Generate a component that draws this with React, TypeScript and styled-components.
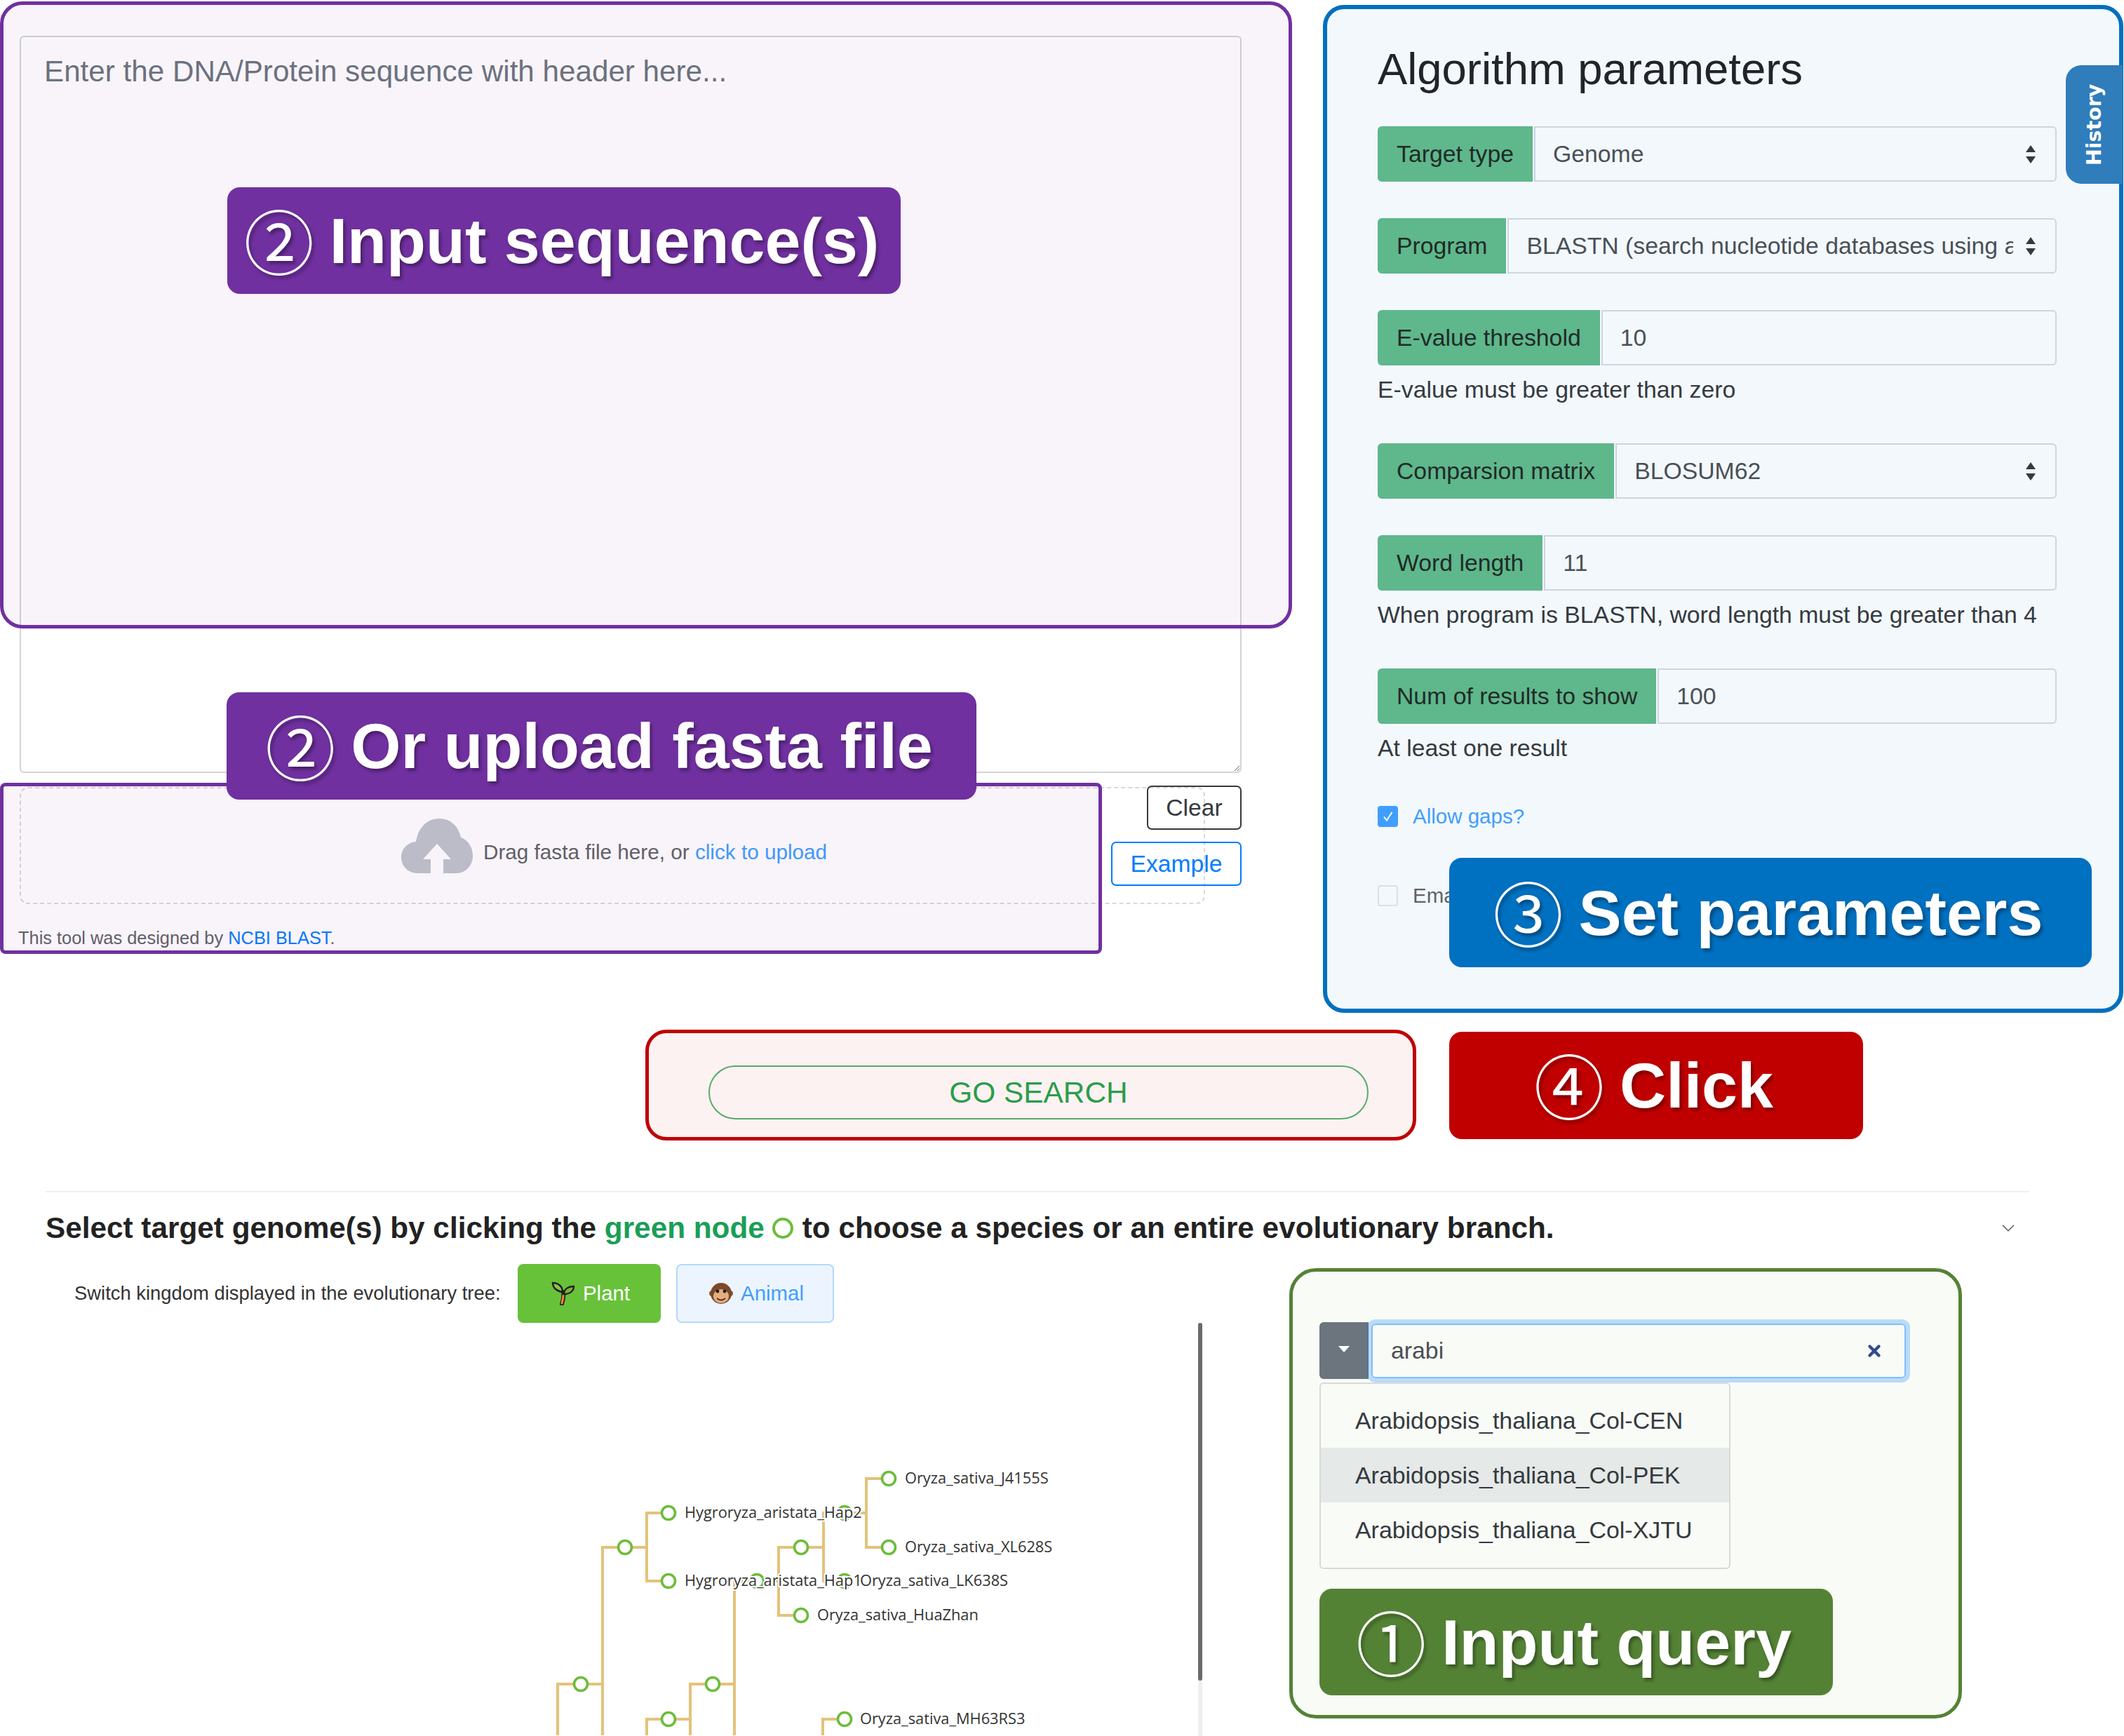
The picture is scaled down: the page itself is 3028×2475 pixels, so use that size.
import * as React from "react";
import styled, { createGlobalStyle } from "styled-components";
import { ChevronDown, X } from "lucide-react";

const GlobalStyle = createGlobalStyle`
    html, body {
        margin: 0;
        padding: 0;
        background: #fff;
        font-family: "Liberation Sans", Arial, sans-serif;
        color: #212529;
    }
`;

const Page = styled.div`
    position: relative;
    width: 3028px;
    height: 2475px;
    overflow: hidden;
    background: #fff;
`;

const TopRow = styled.div`
    position: relative;
    display: flex;
    height: 1444px;
`;

/* ---- callouts ---- */
const Callout = styled.div<{ $bg: string; $w: number; $h: number }>`
    display: flex;
    align-items: center;
    justify-content: center;
    flex: none;
    gap: 29px;
    box-sizing: border-box;
    width: ${p => p.$w}px;
    height: ${p => p.$h}px;
    padding-right: 7px;
    border-radius: 18px;
    background: ${p => p.$bg};
    color: #fff;
    font-family: "Liberation Sans", Arial, sans-serif;
    font-size: 91.6px;
    font-weight: 700;
    white-space: nowrap;
    text-shadow: 3px 4px 4px rgba(0, 0, 0, 0.35);
`;

const Digit = styled.span`
    font-family: "Noto Sans CJK JP", "DejaVu Sans", sans-serif;
    font-size: 100px;
    font-weight: 400;
    line-height: 1;
    width: 93px;
    margin-top: -4px;
    text-align: center;
`;

const SequenceCallout = styled(Callout)`
    position: absolute;
    left: 324px;
    top: 267px;
    z-index: 3;
`;

const UploadCallout = styled(Callout)`
    position: absolute;
    left: 323px;
    top: 987px;
    z-index: 3;
`;

const ParamsCallout = styled(Callout)`
    position: absolute;
    left: 2066px;
    top: 1223px;
    z-index: 3;
`;

/* ---- highlight frames over the form ---- */
const SequenceFrame = styled.div`
    position: absolute;
    left: 0;
    top: 2px;
    width: 1842px;
    height: 894px;
    box-sizing: border-box;
    border: 5px solid #7030a0;
    border-radius: 32px;
    background: rgba(112, 48, 160, 0.05);
    pointer-events: none;
    z-index: 2;
`;

const UploadFrame = styled.div`
    position: absolute;
    left: 0;
    top: 1116px;
    width: 1571px;
    height: 244px;
    box-sizing: border-box;
    border: 5px solid #7030a0;
    border-radius: 8px;
    background: rgba(112, 48, 160, 0.05);
    pointer-events: none;
    z-index: 2;
`;

/* ---- left column ---- */
const LeftColumn = styled.div`
    flex: none;
    box-sizing: border-box;
    width: 1886px;
    padding: 51px 0 0 28px;
`;

const SequenceInput = styled.textarea`
    display: block;
    box-sizing: border-box;
    width: 1742px;
    height: 1051px;
    padding: 17px 33px;
    border: 2px solid #ced4da;
    border-radius: 6px;
    background: #fff;
    font-family: "Liberation Sans", Arial, sans-serif;
    font-size: 42.2px;
    line-height: 1.5;
    outline: none;

    &::placeholder {
        color: #6c757d;
        opacity: 1;
    }
`;

const UploadBlock = styled.div`
    position: relative;
    width: 1742px;
    margin-top: 20px;
`;

const Dropzone = styled.div`
    display: flex;
    align-items: center;
    justify-content: center;
    gap: 15px;
    box-sizing: border-box;
    width: 1690px;
    height: 167px;
    padding-left: 5px;
    border: 2px dashed #d9d9d9;
    border-radius: 12px;
    font-size: 29.7px;
    color: #606266;
`;

const UploadPrompt = styled.span`
    margin-top: 19px;
`;

const UploadLink = styled.em`
    font-style: normal;
    color: #409eff;
`;

const UploadButtons = styled.div`
    position: absolute;
    right: 0;
    top: -2px;
    display: flex;
    flex-direction: column;
    align-items: flex-end;
    gap: 17px;
`;

const OutlineButton = styled.div<{ $color: string; $w: number }>`
    display: flex;
    align-items: center;
    justify-content: center;
    box-sizing: border-box;
    width: ${p => p.$w}px;
    height: 63px;
    border: 2px solid ${p => p.$color};
    border-radius: 7px;
    color: ${p => p.$color};
    font-size: 33.7px;
`;

const Credit = styled.div`
    margin: 29px 0 0 -2px;
    font-size: 25.4px;
    line-height: 39px;
    color: #606266;
`;

const BlueLink = styled.span`
    color: #007bff;
`;

/* ---- parameters panel ---- */
const ParamsPanel = styled.div`
    position: relative;
    flex: none;
    box-sizing: border-box;
    width: 1141px;
    height: 1437px;
    margin-top: 7px;
    padding: 46px 89px 0 72px;
    border: 6px solid #0070c0;
    border-radius: 30px;
    background: #f3f8fc;
`;

const PanelTitle = styled.h2`
    margin: 0 0 42px;
    font-size: 63.4px;
    font-weight: 400;
    line-height: 79px;
    color: #212529;
`;

const HistoryTab = styled.div`
    position: absolute;
    right: -5px;
    top: 80px;
    display: flex;
    align-items: center;
    justify-content: center;
    box-sizing: border-box;
    width: 81px;
    height: 169px;
    background: #2f7dbb;
    color: #fff;
    font-family: "DejaVu Sans", sans-serif;
    font-size: 28.5px;
    font-weight: 700;
    writing-mode: vertical-rl;
    transform: rotate(180deg);
    border-radius: 0 22px 22px 0;
`;

const Field = styled.div`
    margin-bottom: 52px;
`;

const Group = styled.div`
    display: flex;
    height: 79px;
`;

const GroupLabel = styled.div`
    flex: none;
    display: flex;
    align-items: center;
    padding: 0 27px;
    border-radius: 6px 0 0 6px;
    background: #5fb78c;
    color: #1f2b26;
    font-size: 33.75px;
`;

const GroupValue = styled.div`
    flex: 1;
    min-width: 0;
    display: flex;
    align-items: center;
    gap: 17px;
    box-sizing: border-box;
    padding: 0 27px 0 25px;
    margin-left: 2px;
    border: 2px solid #ccd6e0;
    border-radius: 0 6px 6px 0;
    color: #495057;
    font-size: 33.75px;
`;

const ValueText = styled.span`
    flex: 1;
    min-width: 0;
    overflow: hidden;
    white-space: nowrap;
`;

const Hint = styled.div`
    margin-top: 10px;
    font-size: 33.75px;
    line-height: 49px;
    color: #343a40;
`;

const CheckRow = styled.div<{ $gap: number }>`
    display: flex;
    align-items: center;
    gap: 21px;
    height: 30px;
    margin-top: ${p => p.$gap}px;
    font-size: 29.5px;
`;

const CheckBox = styled.span<{ $checked?: boolean }>`
    flex: none;
    display: flex;
    align-items: center;
    justify-content: center;
    box-sizing: border-box;
    width: 29px;
    height: 30px;
    border: 2px solid ${p => (p.$checked ? "#409eff" : "#dcdfe6")};
    border-radius: 4px;
    background: ${p => (p.$checked ? "#409eff" : "transparent")};
`;

const CheckLabel = styled.span<{ $checked?: boolean }>`
    color: ${p => (p.$checked ? "#409eff" : "#606266")};
`;

/* ---- search row ---- */
const SearchRow = styled.div`
    display: flex;
    align-items: center;
    gap: 47px;
    margin-top: 24px;
    padding-left: 920px;
`;

const SearchFrame = styled.div`
    box-sizing: border-box;
    width: 1099px;
    height: 158px;
    padding: 46px 0 0 85px;
    border: 5px solid #c00000;
    border-radius: 30px;
    background: #fbf2f1;
`;

const SearchButton = styled.div`
    display: flex;
    align-items: center;
    justify-content: center;
    box-sizing: border-box;
    width: 941px;
    height: 77px;
    border: 2px solid #56ab6c;
    border-radius: 39px;
    color: #2a9d4a;
    font-size: 42.4px;
`;

/* ---- genome section ---- */
const GenomeSection = styled.section`
    width: 2828px;
    margin: 72px 0 0 65px;
`;

const SectionHeader = styled.div`
    display: flex;
    align-items: center;
    justify-content: space-between;
    box-sizing: border-box;
    height: 104px;
    padding: 0 15px 0 0;
    border-top: 2px solid #eef0f8;
`;

const SectionTitle = styled.h3`
    display: flex;
    align-items: center;
    margin: 0;
    font-size: 42.3px;
    font-weight: 700;
    white-space: pre;
    color: #222;
`;

const GreenWord = styled.span`
    color: #1a9e56;
`;

const NodeSvg = styled.svg`
    margin: 0 12px 0 10px;
`;

const SectionBody = styled.div`
    display: flex;
    align-items: flex-start;
`;

const TreeColumn = styled.div`
    flex: none;
    width: 1773px;
`;

const KingdomRow = styled.div`
    display: flex;
    align-items: center;
    height: 84px;
    padding-left: 41px;
    font-size: 27.4px;
    color: #333;
`;

const KingdomLabel = styled.span`
    margin-right: 24px;
`;

const KingdomButton = styled.div<{ $active?: boolean; $w: number }>`
    display: flex;
    align-items: center;
    justify-content: center;
    gap: 11px;
    box-sizing: border-box;
    width: ${p => p.$w}px;
    height: 84px;
    margin-right: 22px;
    padding-left: 5px;
    border: 2px solid ${p => (p.$active ? "#67c23a" : "#b3d8ff")};
    border-radius: 8px;
    background: ${p => (p.$active ? "#67c23a" : "#ecf5ff")};
    color: ${p => (p.$active ? "#fff" : "#409eff")};
    font-size: 29.4px;
`;

const TreeArea = styled.div`
    display: flex;
    height: 590px;
`;

const TreeCanvas = styled.svg`
    display: block;
    flex: none;
    width: 1643px;
    height: 588px;
`;

const ScrollTrack = styled.div`
    flex: none;
    width: 6px;
    background: #eee;
`;

const ScrollThumb = styled.div`
    height: 510px;
    border-radius: 3px;
    background: #6b6b6b;
`;

const QueryFrame = styled.div`
    flex: none;
    box-sizing: border-box;
    width: 959px;
    height: 642px;
    margin-top: 6px;
    padding: 72px 0 0 38px;
    border: 5px solid #548235;
    border-radius: 38px;
    background: #f9fbf6;
`;

const QueryRow = styled.div`
    display: flex;
    align-items: center;
    height: 81px;
`;

const CaretButton = styled.div`
    flex: none;
    display: flex;
    align-items: center;
    justify-content: center;
    width: 70px;
    height: 81px;
    border-radius: 6px 0 0 6px;
    background: #6c757d;
`;

const Caret = styled.span`
    width: 0;
    height: 0;
    margin-top: -4px;
    border-left: 8px solid transparent;
    border-right: 8px solid transparent;
    border-top: 9px solid #fff;
`;

const QueryInput = styled.div`
    position: relative;
    flex: none;
    display: flex;
    align-items: center;
    justify-content: space-between;
    box-sizing: border-box;
    width: 762px;
    height: 78px;
    margin-left: 4px;
    padding: 0 30px 0 26px;
    border: 2px solid #80bdff;
    border-radius: 6px;
    box-shadow: 0 0 0 6px rgba(0, 123, 255, 0.25);
    color: #495057;
    font-size: 33.8px;
`;

const SuggestList = styled.div`
    box-sizing: border-box;
    width: 586px;
    height: 266px;
    margin-top: 5px;
    padding: 13px 0;
    border: 2px solid #d8dad6;
    border-radius: 6px;
`;

const SuggestItem = styled.div<{ $active?: boolean }>`
    display: flex;
    align-items: center;
    height: 78px;
    padding-left: 49px;
    background: ${p => (p.$active ? "#e5e9e7" : "transparent")};
    color: #343a40;
    font-size: 33.9px;
`;

const QueryCallout = styled(Callout)`
    margin-top: 28px;
`;

/* ---- small drawings ---- */
const SelectArrows = () => (
    <svg width="16" height="28" viewBox="0 0 16 28">
        <path d="M8 1 L15 11 L1 11 Z M8 27 L15 17 L1 17 Z" fill="#343a40" />
    </svg>
);

const CheckMark = () => (
    <svg width="20" height="20" viewBox="0 0 20 20">
        <path d="M4 10.5 L8 15.5 L15.5 4" fill="none" stroke="#fff" strokeWidth="2" />
    </svg>
);

const CloudUpload = () => (
    <svg width="102" height="78" viewBox="0 0 102 78">
        <path
            d="M24 78 C9 78 0 67 0 55 C0 43 9 34 21 33 C24 14 36 0 54 0 C71 0 82 12 85 27 C95 30 102 41 102 53 C102 67 92 78 78 78 L60 78 L60 58 L71 58 L51 36 L31 58 L42 58 L42 78 Z"
            fill="#c0c4cc"
        />
    </svg>
);

const PlantIcon = () => (
    <svg width="34" height="34" viewBox="0 0 34 34">
        <path d="M17 15 C18 21 17 26 15 32" fill="none" stroke="#222" strokeWidth="6" strokeLinecap="round" />
        <path d="M17 20 C17 24 16 27 15 31" fill="none" stroke="#f08a24" strokeWidth="3" strokeLinecap="round" />
        <path d="M16 15 C8 14 2 9 2 2 C10 2 16 7 16 15 Z" fill="#8cc63f" stroke="#222" strokeWidth="2.4" />
        <path d="M18 18 C18 11 24 7 32 7 C32 14 26 18 18 18 Z" fill="#7ab82f" stroke="#222" strokeWidth="2.4" />
    </svg>
);

const MonkeyIcon = () => (
    <svg width="34" height="34" viewBox="0 0 34 34">
        <circle cx="4" cy="17" r="4" fill="#8b5e3c" />
        <circle cx="30" cy="17" r="4" fill="#8b5e3c" />
        <circle cx="17" cy="17" r="15" fill="#7a4a2a" />
        <ellipse cx="17" cy="21" rx="11" ry="10" fill="#e2ae82" />
        <circle cx="12" cy="14" r="2.4" fill="#2a1a10" />
        <circle cx="22" cy="14" r="2.4" fill="#2a1a10" />
        <path d="M11 24 Q17 29 23 24" fill="none" stroke="#5a3018" strokeWidth="2" />
    </svg>
);

const NodeMark = () => (
    <NodeSvg width="32" height="32" viewBox="0 0 32 32">
        <circle cx="16" cy="16" r="13" fill="none" stroke="#6cbd3a" strokeWidth="4" />
    </NodeSvg>
);

/* ---- tree data, in page coordinates ---- */
const treeNodes: [number, number][] = [
    [1267, 2109], [1267, 2207], [953, 2158], [953, 2255], [891, 2207], [828, 2402], [1142, 2207],
    [1204, 2158], [1204, 2255], [1079, 2255], [1142, 2304], [1016, 2402], [953, 2452], [1204, 2452]
];

const treeBranches = [
    "M1204 2158 H1235 M1267 2109 H1235 V2207 H1267",
    "M1142 2207 H1174 M1204 2158 H1174 V2255 H1204",
    "M1079 2255 H1110 M1142 2207 H1110 V2304 H1142",
    "M891 2207 H922 M953 2158 H922 V2255 H953",
    "M828 2402 H859 M891 2207 H859 V2480",
    "M1016 2402 H1047 M1079 2255 H1047 V2480",
    "M953 2452 H984 M1016 2402 H984 V2480",
    "M953 2452 H922 V2480",
    "M828 2402 H795 V2480",
    "M1204 2452 H1173 V2480"
];

const treeLabels: [number, number, string][] = [
    [1290, 2109, "Oryza_sativa_J4155S"],
    [1290, 2207, "Oryza_sativa_XL628S"],
    [976, 2158, "Hygroryza_aristata_Hap2"],
    [976, 2255, "Hygroryza_aristata_Hap1"],
    [1226, 2255, "Oryza_sativa_LK638S"],
    [1165, 2304, "Oryza_sativa_HuaZhan"],
    [1226, 2452, "Oryza_sativa_MH63RS3"]
];

const params = {
    purple: "#7030a0",
    blue: "#0070c0",
    red: "#c00000",
    green: "#548235"
};

const App: React.FC = () => {
    return <Page>
        <GlobalStyle />
        <TopRow>
            <SequenceFrame />
            <UploadFrame />
            <SequenceCallout $bg={params.purple} $w={960} $h={152}>
                <Digit>②</Digit>Input sequence(s)
            </SequenceCallout>
            <UploadCallout $bg={params.purple} $w={1069} $h={153}>
                <Digit>②</Digit>Or upload fasta file
            </UploadCallout>
            <ParamsCallout $bg={params.blue} $w={916} $h={156}>
                <Digit>③</Digit>Set parameters
            </ParamsCallout>

            <LeftColumn>
                <SequenceInput readOnly placeholder="Enter the DNA/Protein sequence with header here..." />
                <UploadBlock>
                    <Dropzone>
                        <CloudUpload />
                        <UploadPrompt>Drag fasta file here, or <UploadLink>click to upload</UploadLink></UploadPrompt>
                    </Dropzone>
                    <UploadButtons>
                        <OutlineButton $color="#343a40" $w={135}>Clear</OutlineButton>
                        <OutlineButton $color="#007bff" $w={186}>Example</OutlineButton>
                    </UploadButtons>
                    <Credit>This tool was designed by <BlueLink>NCBI BLAST</BlueLink>.</Credit>
                </UploadBlock>
            </LeftColumn>

            <ParamsPanel>
                <HistoryTab>History</HistoryTab>
                <PanelTitle>Algorithm parameters</PanelTitle>
                <Field>
                    <Group>
                        <GroupLabel>Target type</GroupLabel>
                        <GroupValue><ValueText>Genome</ValueText><SelectArrows /></GroupValue>
                    </Group>
                </Field>
                <Field>
                    <Group>
                        <GroupLabel>Program</GroupLabel>
                        <GroupValue>
                            <ValueText>BLASTN (search nucleotide databases using a nucleotide query)</ValueText>
                            <SelectArrows />
                        </GroupValue>
                    </Group>
                </Field>
                <Field>
                    <Group>
                        <GroupLabel>E-value threshold</GroupLabel>
                        <GroupValue><ValueText>10</ValueText></GroupValue>
                    </Group>
                    <Hint>E-value must be greater than zero</Hint>
                </Field>
                <Field>
                    <Group>
                        <GroupLabel>Comparsion matrix</GroupLabel>
                        <GroupValue><ValueText>BLOSUM62</ValueText><SelectArrows /></GroupValue>
                    </Group>
                </Field>
                <Field>
                    <Group>
                        <GroupLabel>Word length</GroupLabel>
                        <GroupValue><ValueText>11</ValueText></GroupValue>
                    </Group>
                    <Hint>When program is BLASTN, word length must be greater than 4</Hint>
                </Field>
                <Field>
                    <Group>
                        <GroupLabel>Num of results to show</GroupLabel>
                        <GroupValue><ValueText>100</ValueText></GroupValue>
                    </Group>
                    <Hint>At least one result</Hint>
                </Field>
                <CheckRow $gap={58}>
                    <CheckBox $checked><CheckMark /></CheckBox>
                    <CheckLabel $checked>Allow gaps?</CheckLabel>
                </CheckRow>
                <CheckRow $gap={83}>
                    <CheckBox />
                    <CheckLabel>Email me the results</CheckLabel>
                </CheckRow>
            </ParamsPanel>
        </TopRow>

        <SearchRow>
            <SearchFrame>
                <SearchButton>GO SEARCH</SearchButton>
            </SearchFrame>
            <Callout $bg={params.red} $w={590} $h={153}>
                <Digit>④</Digit>Click
            </Callout>
        </SearchRow>

        <GenomeSection>
            <SectionHeader>
                <SectionTitle>
                    Select target genome(s) by clicking the <GreenWord>green node</GreenWord>
                    <NodeMark />
                    to choose a species or an entire evolutionary branch.
                </SectionTitle>
                <ChevronDown size={30} strokeWidth={1.4} color="#606266" />
            </SectionHeader>
            <SectionBody>
                <TreeColumn>
                    <KingdomRow>
                        <KingdomLabel>Switch kingdom displayed in the evolutionary tree:</KingdomLabel>
                        <KingdomButton $active $w={204}><PlantIcon />Plant</KingdomButton>
                        <KingdomButton $w={225}><MonkeyIcon />Animal</KingdomButton>
                    </KingdomRow>
                    <TreeArea>
                        <TreeCanvas viewBox="65 1887 1643 588">
                            {treeBranches.map(d =>
                                <path key={d} d={d} fill="none" stroke="#e3c27a" strokeWidth="4" />
                            )}
                            {treeNodes.map(([x, y]) =>
                                <circle key={`${x}-${y}`} cx={x} cy={y} r="9.5" fill="#fff" stroke="#6cbd3a" strokeWidth="3.6" />
                            )}
                            {treeLabels.map(([x, y, text]) =>
                                <text
                                    key={text}
                                    x={x}
                                    y={y + 7}
                                    fontFamily="'Open Sans', sans-serif"
                                    fontSize="21.8"
                                    fill="#333"
                                    stroke="#fff"
                                    strokeWidth="4"
                                    paintOrder="stroke"
                                >{text}</text>
                            )}
                        </TreeCanvas>
                        <ScrollTrack><ScrollThumb /></ScrollTrack>
                    </TreeArea>
                </TreeColumn>
                <QueryFrame>
                    <QueryRow>
                        <CaretButton><Caret /></CaretButton>
                        <QueryInput>
                            arabi
                            <X size={26} strokeWidth={4} color="#2f4b8f" />
                        </QueryInput>
                    </QueryRow>
                    <SuggestList>
                        <SuggestItem>Arabidopsis_thaliana_Col-CEN</SuggestItem>
                        <SuggestItem $active>Arabidopsis_thaliana_Col-PEK</SuggestItem>
                        <SuggestItem>Arabidopsis_thaliana_Col-XJTU</SuggestItem>
                    </SuggestList>
                    <QueryCallout $bg={params.green} $w={732} $h={152}>
                        <Digit>①</Digit>Input query
                    </QueryCallout>
                </QueryFrame>
            </SectionBody>
        </GenomeSection>
    </Page>;
};

export default App;
